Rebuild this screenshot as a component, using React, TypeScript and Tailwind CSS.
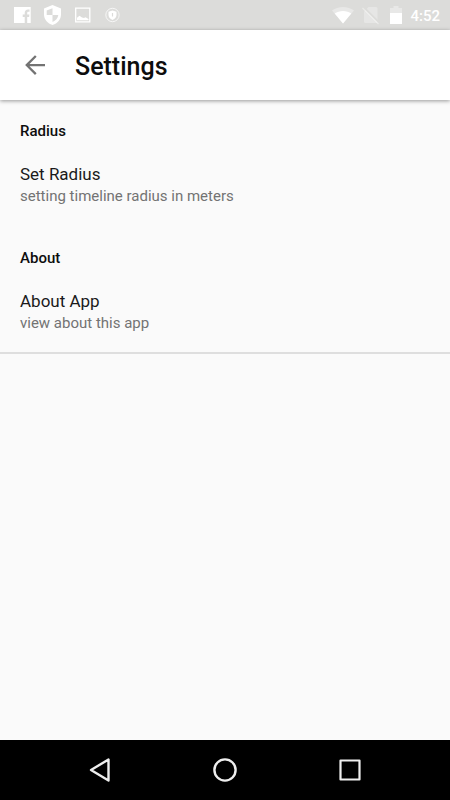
import React from 'react';

const sections = [
  {
    title: 'Radius',
    items: [{ label: 'Set Radius', summary: 'setting timeline radius in meters' }],
  },
  {
    title: 'About',
    items: [{ label: 'About App', summary: 'view about this app' }],
  },
];

function StatusBar() {
  return (
    <div className="flex h-[30px] items-center justify-between bg-[#dcdcda] pl-3 pr-2.5 text-white">
      <div className="flex items-center gap-2.5">
        <svg className="h-5 w-5" viewBox="0 0 20 20" aria-hidden="true">
          <path d="M2 2h16.700v16H2z" fill="currentColor" />
          <path d="M12.700 18v-6h-2V9.500h2V8c0-2.300 1.300-3.600 3.400-3.600h1.400v2.300h-1c-.9 0-1.300.4-1.300 1.200v1.600h2.200l-.3 2.500h-1.900v6z" fill="#dcdcda" />
        </svg>
        <svg className="h-5 w-5" viewBox="0 0 20 20" aria-hidden="true">
          <path d="M10.500 0 19 3.500v6c0 5-3.500 9-8.500 10.500C5.500 18.500 2 14.500 2 9.500v-6z" fill="currentColor" />
          <path d="M10.500 3.200V10H4.700V5.600zM10.500 10h5.800c-.4 3.200-2.600 5.800-5.800 7z" fill="#dcdcda" />
        </svg>
        <svg className="h-5 w-5" viewBox="0 0 20 20" aria-hidden="true">
          <path d="M3.700 3.200h14.100v13.600H3.700z" fill="none" stroke="currentColor" strokeWidth="1.300" />
          <path d="M5 15.200v-2.400l2.500-2 2.500 1.700 2 .5 1.500-.7 3 1.700v1.200z" fill="currentColor" />
        </svg>
        <svg className="h-5 w-5" viewBox="0 0 20 20" aria-hidden="true">
          <circle cx="10.500" cy="10" r="6.700" fill="none" stroke="currentColor" strokeWidth=".9" opacity=".8" />
          <path d="m10.500 5.500 4 1.200v3.300c0 2.300-1.600 4-4 5-2.400-1-4-2.700-4-5V6.700z" fill="currentColor" />
          <path d="M10.500 8v3.500" stroke="#dcdcda" strokeWidth="1.200" />
        </svg>
      </div>
      <div className="flex items-center">
        <svg className="h-5 w-6" viewBox="0 0 24 20" fill="currentColor" aria-hidden="true">
          <path d="M1 5.500C7 .8 17 .8 23 5.500L12 18.500z" opacity=".35" />
          <path d="M3.700 8.500C8 5 16 5 20.300 8.500L12 18.500z" />
        </svg>
        <svg className="ml-1.5 h-5 w-5" viewBox="0 0 20 20" aria-hidden="true">
          <path d="M7.500 2H15q1.500 0 1.500 1.500V18H4.500q-1.500 0-1.500-1.500v-10z" fill="currentColor" opacity=".3" />
          <path d="M2.500 2 18 17.500" stroke="#dcdcda" strokeWidth="1.800" />
          <path d="M1.500 3 17.500 19" stroke="currentColor" strokeWidth="1.200" opacity=".4" />
        </svg>
        <svg className="ml-[5px] h-5 w-5" viewBox="0 0 20 20" fill="currentColor" aria-hidden="true">
          <path d="M4 3h3.500V1h5v2H16v5H4z" opacity=".35" />
          <path d="M4 8h12v11H4z" />
        </svg>
        <span className="ml-1 pt-px text-[15px] font-medium leading-5">4:52</span>
      </div>
    </div>
  );
}

function Header() {
  return (
    <header className="flex h-[70px] items-center bg-white px-5 shadow-[0_1px_4px_rgba(0,0,0,0.4)]">
      <button type="button" aria-label="Back" className="text-[#737373]">
        <svg className="h-[30px] w-[30px]" viewBox="0 0 24 24" fill="currentColor" aria-hidden="true">
          <path d="M20 11.100H7.600l5.700-5.700L12 4.100 4.100 12l7.900 7.900 1.300-1.300-5.700-5.700H20z" />
        </svg>
      </button>
      <h1 className="ml-[25px] pt-1 text-[25px] font-medium leading-8 text-[#0d0d0d]">Settings</h1>
    </header>
  );
}

function NavBar() {
  return (
    <nav className="flex h-[60px] items-center justify-center bg-black text-[#eee]">
      <button type="button" aria-label="Back" className="flex w-[125px] justify-center">
        <svg className="h-6 w-6" viewBox="0 0 24 24" fill="none" stroke="currentColor" strokeWidth="2.400" strokeLinejoin="round" aria-hidden="true">
          <path d="M20.500 1.500v21L3 12z" />
        </svg>
      </button>
      <button type="button" aria-label="Home" className="flex w-[125px] justify-center">
        <svg className="h-6 w-6" viewBox="0 0 24 24" fill="none" stroke="currentColor" strokeWidth="2.400" aria-hidden="true">
          <circle cx="12" cy="12" r="10.600" />
        </svg>
      </button>
      <button type="button" aria-label="Recent apps" className="flex w-[125px] justify-center">
        <svg className="h-6 w-6" viewBox="0 0 24 24" fill="none" stroke="currentColor" strokeWidth="2.200" strokeLinejoin="round" aria-hidden="true">
          <path d="M2.500 2.500h19v19h-19z" />
        </svg>
      </button>
    </nav>
  );
}

export default function App() {
  return (
    <div className="flex min-h-screen flex-col bg-[#fafafa] font-['Roboto',sans-serif]">
      <StatusBar />
      <Header />
      <main className="flex-1">
        <div className="flex flex-col gap-[22px] border-b-2 border-[#dedede] pt-5">
          {sections.map((section) => (
            <section key={section.title}>
              <h2 className="px-5 text-[15px] font-medium leading-[22px] text-[#0d0d0d]">{section.title}</h2>
              {section.items.map((item) => (
                <button key={item.label} type="button" className="mt-[21px] block w-full px-5 pb-[18px] text-left">
                  <span className="block text-[17px] leading-[22px] text-[#1a1a1a]">{item.label}</span>
                  <span className="block text-[15px] leading-[22px] text-[#737373]">{item.summary}</span>
                </button>
              ))}
            </section>
          ))}
        </div>
      </main>
      <NavBar />
    </div>
  );
}
